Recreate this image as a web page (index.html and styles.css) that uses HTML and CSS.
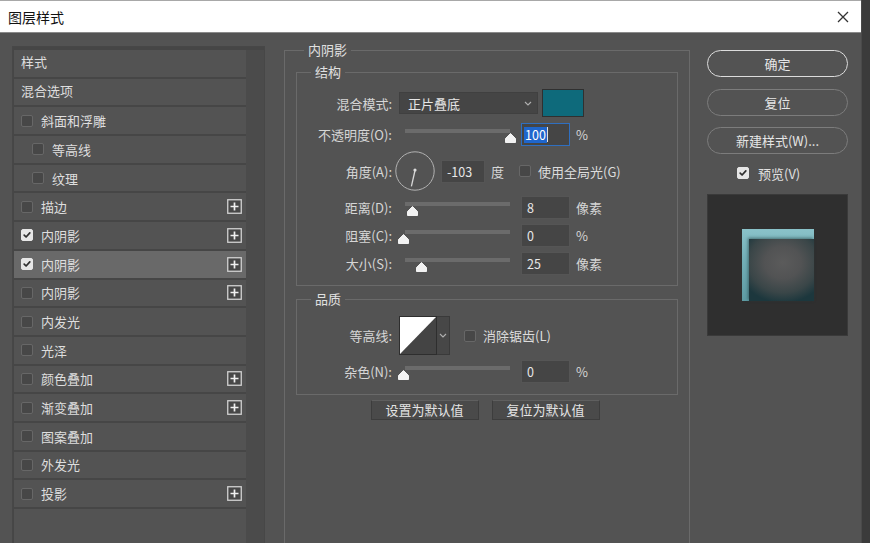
FILE: index.html
```html
<!DOCTYPE html>
<html lang="zh-CN">
<head>
<meta charset="utf-8">
<title>图层样式</title>
<link rel="stylesheet" href="styles.css">
</head>
<body>
<div class="window">
  <header class="titlebar">
    <span class="title">图层样式</span>
    <svg class="close" width="12" height="12" viewBox="0 0 12 12"><path d="M1 1L11 11M11 1L1 11"/></svg>
  </header>
  <div class="content">
    <aside class="styles-panel">
      <ul class="style-list">
        <li class="row head">样式</li>
        <li class="row head">混合选项</li>
        <li class="row"><span class="cb"></span><span class="name">斜面和浮雕</span></li>
        <li class="row indent"><span class="cb"></span><span class="name">等高线</span></li>
        <li class="row indent"><span class="cb"></span><span class="name">纹理</span></li>
        <li class="row"><span class="cb"></span><span class="name">描边</span><svg class="plus" viewBox="0 0 15 15"><rect x="0.75" y="0.75" width="13.5" height="13.5"/><path d="M3.5 7.5H11.5M7.5 3.5V11.5"/></svg></li>
        <li class="row"><span class="cb on"><svg viewBox="0 0 11 11"><path d="M2.4 5.6L4.5 7.7L8.6 3.2"/></svg></span><span class="name">内阴影</span><svg class="plus" viewBox="0 0 15 15"><rect x="0.75" y="0.75" width="13.5" height="13.5"/><path d="M3.5 7.5H11.5M7.5 3.5V11.5"/></svg></li>
        <li class="row selected"><span class="cb on"><svg viewBox="0 0 11 11"><path d="M2.4 5.6L4.5 7.7L8.6 3.2"/></svg></span><span class="name">内阴影</span><svg class="plus" viewBox="0 0 15 15"><rect x="0.75" y="0.75" width="13.5" height="13.5"/><path d="M3.5 7.5H11.5M7.5 3.5V11.5"/></svg></li>
        <li class="row"><span class="cb"></span><span class="name">内阴影</span><svg class="plus" viewBox="0 0 15 15"><rect x="0.75" y="0.75" width="13.5" height="13.5"/><path d="M3.5 7.5H11.5M7.5 3.5V11.5"/></svg></li>
        <li class="row"><span class="cb"></span><span class="name">内发光</span></li>
        <li class="row"><span class="cb"></span><span class="name">光泽</span></li>
        <li class="row"><span class="cb"></span><span class="name">颜色叠加</span><svg class="plus" viewBox="0 0 15 15"><rect x="0.75" y="0.75" width="13.5" height="13.5"/><path d="M3.5 7.5H11.5M7.5 3.5V11.5"/></svg></li>
        <li class="row"><span class="cb"></span><span class="name">渐变叠加</span><svg class="plus" viewBox="0 0 15 15"><rect x="0.75" y="0.75" width="13.5" height="13.5"/><path d="M3.5 7.5H11.5M7.5 3.5V11.5"/></svg></li>
        <li class="row"><span class="cb"></span><span class="name">图案叠加</span></li>
        <li class="row"><span class="cb"></span><span class="name">外发光</span></li>
        <li class="row"><span class="cb"></span><span class="name">投影</span><svg class="plus" viewBox="0 0 15 15"><rect x="0.75" y="0.75" width="13.5" height="13.5"/><path d="M3.5 7.5H11.5M7.5 3.5V11.5"/></svg></li>
        <li class="row filler"></li>
      </ul>
      <div class="scroll-col"></div>
    </aside>

    <main class="settings">
      <fieldset class="group outer">
        <legend>内阴影</legend>

        <fieldset class="group inner structure">
          <legend>结构</legend>
          <div class="frow blend">
            <label class="lbl">混合模式:</label>
            <div class="select"><span>正片叠底</span><svg class="chev" viewBox="0 0 8 5"><path d="M1 1L4 4L7 1"/></svg></div>
            <div class="swatch"></div>
          </div>
          <div class="frow">
            <label class="lbl">不透明度(O):</label>
            <div class="slider"><div class="track"><svg class="thumb" style="left:100%" viewBox="0 0 11 10"><path d="M5.5 0.5L10.5 5.5V9.5H0.5V5.5Z"/></svg></div></div>
            <div class="num focus"><span class="sel">100</span><span class="caret"></span></div>
            <span class="unit">%</span>
          </div>
          <div class="frow angle">
            <label class="lbl">角度(A):</label>
            <svg class="dial" width="40" height="40" viewBox="0 0 40 40"><circle cx="20" cy="20" r="19.2"/><path d="M20 19.5L16.4 35.4"/><circle class="dot" cx="20" cy="19" r="1.6"/></svg>
            <div class="num small">-103</div>
            <span class="unit deg">度</span>
            <span class="cb gl"></span>
            <span class="cbtext">使用全局光(G)</span>
          </div>
          <div class="frow">
            <label class="lbl">距离(D):</label>
            <div class="slider"><div class="track"><svg class="thumb" style="left:7.6%" viewBox="0 0 11 10"><path d="M5.5 0.5L10.5 5.5V9.5H0.5V5.5Z"/></svg></div></div>
            <div class="num">8</div>
            <span class="unit">像素</span>
          </div>
          <div class="frow">
            <label class="lbl">阻塞(C):</label>
            <div class="slider"><div class="track"><svg class="thumb" style="left:-1%" viewBox="0 0 11 10"><path d="M5.5 0.5L10.5 5.5V9.5H0.5V5.5Z"/></svg></div></div>
            <div class="num">0</div>
            <span class="unit">%</span>
          </div>
          <div class="frow">
            <label class="lbl">大小(S):</label>
            <div class="slider"><div class="track"><svg class="thumb" style="left:15.5%" viewBox="0 0 11 10"><path d="M5.5 0.5L10.5 5.5V9.5H0.5V5.5Z"/></svg></div></div>
            <div class="num">25</div>
            <span class="unit">像素</span>
          </div>
        </fieldset>

        <fieldset class="group inner quality">
          <legend>品质</legend>
          <div class="frow contour-row">
            <label class="lbl">等高线:</label>
            <div class="contour"><svg width="36" height="37" viewBox="0 0 36 37" preserveAspectRatio="none"><path d="M0 0H36L0 37Z"/></svg></div>
            <div class="contour-drop"><svg class="chev" viewBox="0 0 8 5"><path d="M1 1L4 4L7 1"/></svg></div>
            <span class="cb aa"></span>
            <span class="cbtext">消除锯齿(L)</span>
          </div>
          <div class="frow">
            <label class="lbl">杂色(N):</label>
            <div class="slider"><div class="track"><svg class="thumb" style="left:-1%" viewBox="0 0 11 10"><path d="M5.5 0.5L10.5 5.5V9.5H0.5V5.5Z"/></svg></div></div>
            <div class="num">0</div>
            <span class="unit">%</span>
          </div>
        </fieldset>

        <div class="defaults">
          <button class="flat">设置为默认值</button>
          <button class="flat">复位为默认值</button>
        </div>
      </fieldset>
    </main>

    <aside class="actions">
      <button class="pill primary">确定</button>
      <button class="pill">复位</button>
      <button class="pill">新建样式(W)...</button>
      <div class="preview-toggle"><span class="cb on"><svg viewBox="0 0 11 11"><path d="M2.4 5.6L4.5 7.7L8.6 3.2"/></svg></span><span>预览(V)</span></div>
      <div class="preview">
        <div class="sample"><div class="sample-inner"></div></div>
      </div>
    </aside>
  </div>
</div>
</body>
</html>
```

FILE: styles.css
```css
* { box-sizing: border-box; }
html, body { margin: 0; padding: 0; }
body {
  width: 870px;
  height: 543px;
  overflow: hidden;
  background: #3b3b3b;
  font-family: "Noto Sans CJK SC", "Noto Sans", sans-serif;
  font-size: 13px;
  color: #dcdcdc;
}
.window {
  width: 862px;
  height: 543px;
  background: #535353;
  display: flex;
  flex-direction: column;
  border-right: 1px solid #4a4a4a;
}
.titlebar {
  flex: none;
  height: 33px;
  background: #ffffff;
  border-top: 1px solid #a8a8a8;
  border-bottom: 1px solid #8a8a8a;
  display: flex;
  align-items: center;
  justify-content: space-between;
  padding: 0 12px 0 8px;
  color: #111;
  font-size: 14px;
}
.close { width: 12px; height: 12px; }
.close path { stroke: #333; stroke-width: 1.3; fill: none; }

.content {
  flex: 1;
  min-height: 0;
  display: flex;
  align-items: flex-start;
  padding-left: 12px;
  overflow: hidden;
}

/* left list */
.styles-panel {
  flex: none;
  width: 253px;
  height: 520px;
  margin-top: 13px;
  border: 1px solid #474747;
  background: #464646;
  display: flex;
  padding: 3px 0 0 1px;
}
.style-list {
  list-style: none;
  margin: 0;
  padding: 0;
  width: 232px;
  display: flex;
  flex-direction: column;
}
.row {
  flex: none;
  height: 26.7px;
  margin-bottom: 2px;
  background: #535353;
  display: flex;
  align-items: center;
  padding-left: 7px;
  padding-right: 4px;
  color: #dedede;
}
.row.head { padding-bottom: 3px; }
.row.filler { flex: 1; margin-bottom: 0; }
.row.indent { padding-left: 18px; }
.row.selected { background: #696969; }
.row .cb { margin-right: 8px; }
.row .name { flex: 1; }
.scroll-col { width: 18px; background: #4b4b4b; align-self: stretch; }

.cb {
  flex: none;
  width: 12px;
  height: 12px;
  border: 1px solid #676767;
  border-radius: 2px;
  background: #474747;
  display: inline-flex;
}
.cb.on { background: #e6e6e6; border-color: #e6e6e6; }
.cb svg { width: 10px; height: 10px; }
.cb svg path { fill: none; stroke: #2e2e2e; stroke-width: 1.9; stroke-linecap: round; stroke-linejoin: round; }

.plus { width: 15px; height: 15px; flex: none; }
.plus rect { fill: #474747; stroke: #d2d2d2; stroke-width: 1.3; }
.plus path { stroke: #f0f0f0; stroke-width: 1.7; }

/* middle */
.settings {
  flex: none;
  width: 406px;
  margin-left: 19px;
  margin-top: 9px;
}
.group {
  margin: 0;
  padding: 0;
  min-width: 0;
  border: 1px solid #6a6a6a;
}
.group legend {
  padding: 0 4px;
  line-height: 16px;
  color: #e0e0e0;
}
.outer {
  padding: 0 11px;
  min-height: 560px;
}
.outer > legend { margin-left: 8px; }
.inner > legend { margin-left: 14px; }
.structure {
  margin-top: 6px;
  padding: 9px 0 10px;
  display: flex;
  flex-direction: column;
  gap: 5px;
}
.structure .blend { margin-bottom: 1px; }
.quality {
  margin-top: 5px;
  padding: 9px 0 11px;
  display: flex;
  flex-direction: column;
  gap: 5px;
}
.frow {
  display: flex;
  align-items: center;
  height: 23px;
}
.frow.blend { height: 28px; }
.frow.angle { height: 40px; }
.frow.contour-row { height: 39px; }
.lbl {
  flex: none;
  width: 95px;
  text-align: right;
  color: #d6d6d6;
  margin-right: 7px;
}
.select {
  width: 139px;
  height: 22px;
  background: #454545;
  border: 1px solid #404040;
  display: flex;
  align-items: center;
  justify-content: space-between;
  padding: 0 5px 0 8px;
  color: #e6e6e6;
}
.chev { width: 8px; height: 5px; }
.chev path { fill: none; stroke: #b0b0b0; stroke-width: 1.1; }
.swatch {
  width: 42px;
  height: 28px;
  margin-left: 4px;
  background: #0e6a7b;
  border: 1px solid #303030;
}
.slider {
  align-self: stretch;
  width: 116px;
  margin-right: 6px;
  padding-left: 6px;
}
.track {
  position: relative;
  margin-top: 6px;
  width: 105px;
  height: 4px;
  background: #6b6b6b;
}
.thumb {
  position: absolute;
  top: 4px;
  width: 11px;
  height: 10px;
  margin-left: -5.5px;
}
.thumb path { fill: #f2f2f2; stroke: #f2f2f2; stroke-width: 1; stroke-linejoin: round; }
.num {
  width: 49px;
  height: 23px;
  background: #454545;
  border: 1px solid #555555;
  display: flex;
  align-items: center;
  padding-left: 5px;
  font-size: 12.5px;
  color: #e8e8e8;
}
.num.focus { border: 1px solid #2f6fc0; padding-left: 2px; }
.sel { background: #1f66cc; color: #fff; padding: 0 1px; line-height: 16px; }
.caret { width: 1px; height: 15px; background: #e0e0e0; }
.num.small { width: 44px; }
.unit { margin-left: 6px; color: #d6d6d6; }
.dial { margin-left: -4px; margin-right: 6px; flex: none; }
.dial circle { fill: none; stroke: #b2b2b2; stroke-width: 1; }
.dial path { stroke: #d8d8d8; stroke-width: 1.3; }
.dial .dot { fill: #dcdcdc; stroke: none; }
.unit.deg { margin-left: 6px; }
.cb.gl { margin-left: 15px; margin-right: 7px; }
.cbtext { color: #dcdcdc; }

.contour {
  width: 38px;
  height: 39px;
  background: #444;
  border: 1px solid #2e2e2e;
}
.contour svg { display: block; }
.contour path { fill: #ffffff; }
.contour-drop {
  width: 13px;
  height: 39px;
  background: #474747;
  border: 1px solid #3a3a3a;
  border-left: none;
  display: flex;
  align-items: center;
  justify-content: center;
}
.cb.aa { margin-left: 14px; margin-right: 7px; }

.defaults {
  display: flex;
  justify-content: center;
  gap: 13px;
  margin-top: 5px;
  padding-right: 4px;
}
.flat {
  width: 108px;
  height: 20px;
  background: #4a4a4a;
  border: 1px solid #3d3d3d;
  border-top-color: #5f5f5f;
  color: #e4e4e4;
  font: inherit;
  font-size: 13px;
  padding: 0;
  line-height: 18px;
}

/* right */
.actions {
  flex: none;
  width: 141px;
  margin-left: 17px;
  margin-top: 17px;
  display: flex;
  flex-direction: column;
}
.pill {
  height: 27px;
  border-radius: 14px;
  background: transparent;
  border: 1.5px solid #7c7c7c;
  color: #e6e6e6;
  font: inherit;
  font-size: 13px;
  padding: 0;
  margin-bottom: 11px;
}
.pill.primary { border-color: #dcdcdc; margin-bottom: 12px; }
.preview-toggle {
  display: flex;
  align-items: center;
  height: 16px;
  margin-top: 0;
  padding-left: 30px;
  gap: 9px;
  color: #e0e0e0;
}
.preview {
  margin-top: 13px;
  height: 142px;
  background: #2f2f2f;
  border: 1px solid #3a3a3a;
  display: flex;
  align-items: center;
  justify-content: center;
}
.sample {
  width: 72px;
  height: 72px;
  background: linear-gradient(180deg, #8ac2c9 0%, #74b0b8 40%, #5e9ba3 100%);
  padding: 10px 0 0 7px;
  display: flex;
}
.sample-inner {
  flex: 1;
  background: radial-gradient(ellipse 70% 65% at 52% 38%, #5b5b5b 0%, #525354 40%, #3a4648 75%, #1c373d 100%);
  box-shadow: -1px -1px 3px rgba(30, 60, 64, 0.6);
}
```
